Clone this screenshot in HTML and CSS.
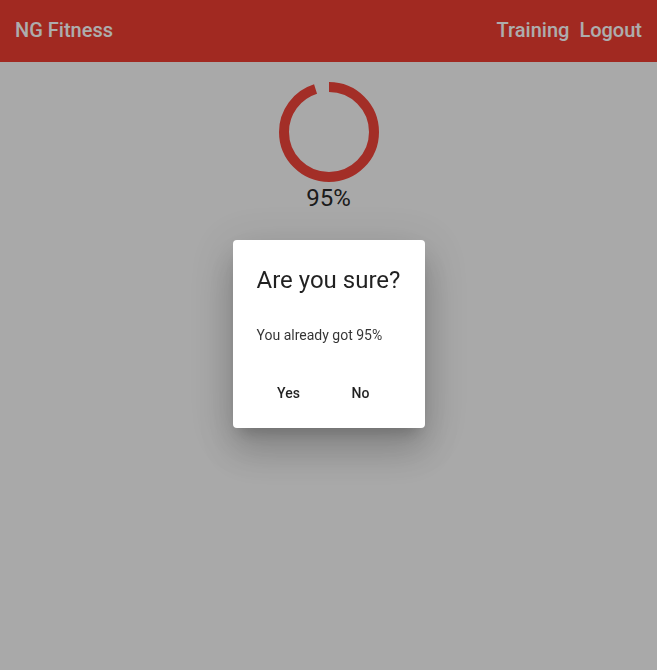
FILE: index.html
```html
<!DOCTYPE html>
<html lang="en">
<head>
<meta charset="utf-8">
<title>NG Fitness</title>
<link rel="stylesheet" href="styles.css">
</head>
<body>
  <header class="toolbar">
    <span class="brand">NG Fitness</span>
    <nav class="nav">
      <a class="nav-link">Training</a>
      <a class="nav-link">Logout</a>
    </nav>
  </header>
  <main class="content">
    <svg class="spinner" width="100" height="100" viewBox="0 0 100 100">
      <circle cx="50" cy="50" r="45" fill="none" stroke="#f1443a" stroke-width="10"
        stroke-dasharray="282.74" stroke-dashoffset="14.14" transform="rotate(-90 50 50)"/>
    </svg>
    <div class="progress-label">95%</div>
  </main>
  <div class="backdrop">
    <div class="dialog">
      <h2 class="dialog-title">Are you sure?</h2>
      <p class="dialog-text">You already got 95%</p>
      <div class="dialog-actions">
        <button class="btn">Yes</button>
        <button class="btn">No</button>
      </div>
    </div>
  </div>
</body>
</html>
```
FILE: styles.css
```css
* { box-sizing: border-box; }
html, body { margin: 0; height: 100%; }
body {
  font-family: Roboto, "Helvetica Neue", sans-serif;
  background: #fafafa;
  color: rgba(0,0,0,0.87);
}
.toolbar {
  height: 62px;
  background: #ee3d31;
  color: #fff;
  display: flex;
  align-items: center;
  justify-content: space-between;
  padding: 0 15px 2px;
  font-size: 20px;
  font-weight: 500;
}
.nav { display: flex; gap: 10px; }
.nav-link { color: #fff; }
.content {
  display: flex;
  flex-direction: column;
  align-items: center;
  padding-top: 20px;
}
.spinner { display: block; }
.progress-label {
  font-size: 24px;
  line-height: 32px;
  color: #2a2a2a;
}
.backdrop {
  position: fixed;
  inset: 0;
  background: rgba(0,0,0,0.32);
  display: flex;
  align-items: center;
  justify-content: center;
}
.dialog {
  width: 192px;
  height: 188px;
  background: #fff;
  border-radius: 4px;
  padding: 24px 24px 9px;
  box-shadow: 0 11px 15px -7px rgba(0,0,0,.2), 0 24px 38px 3px rgba(0,0,0,.14), 0 9px 46px 8px rgba(0,0,0,.12);
  margin-top: -2px;
  display: flex;
  flex-direction: column;
}
.dialog-title {
  margin: 0;
  font-size: 24px;
  font-weight: 400;
  line-height: 32px;
  color: rgba(0,0,0,0.87);
  white-space: nowrap;
}
.dialog-text {
  margin: 29px 0 0;
  font-size: 14px;
  line-height: 20px;
  color: rgba(0,0,0,0.8);
  white-space: nowrap;
}
.dialog-actions {
  display: flex;
  gap: 8px;
  padding: 8px 0;
  margin-top: auto;
}
.btn {
  min-width: 64px;
  height: 36px;
  padding: 0 16px;
  border: 0;
  background: transparent;
  font-family: Roboto, sans-serif;
  font-size: 14px;
  font-weight: 500;
  color: rgba(0,0,0,0.87);
  border-radius: 4px;
}
```
